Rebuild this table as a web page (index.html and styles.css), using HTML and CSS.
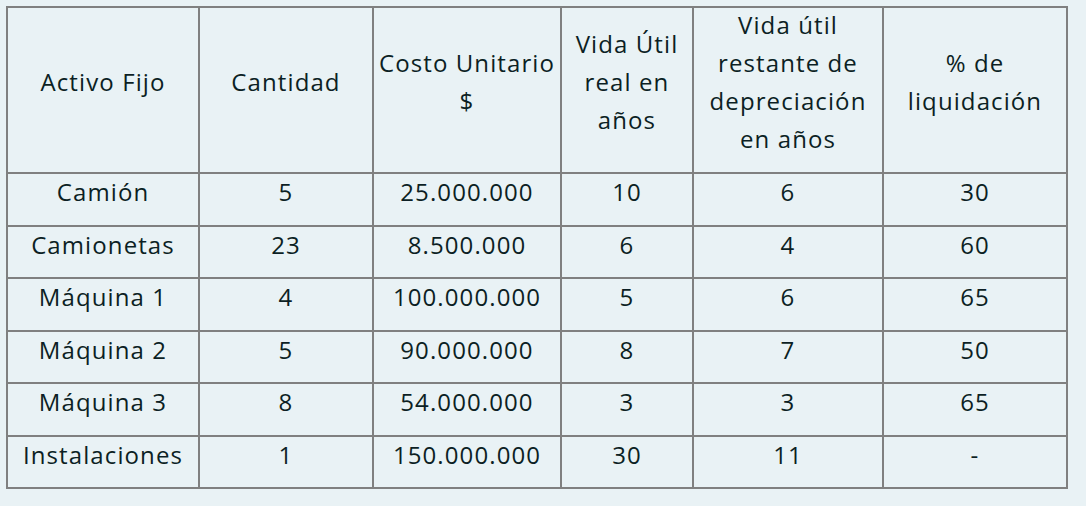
FILE: index.html
```html
<!DOCTYPE html>
<html lang="es">
<head>
<meta charset="utf-8">
<title>Activos fijos</title>
<link rel="stylesheet" href="styles.css">
</head>
<body>
<table class="assets">
  <colgroup>
    <col class="c1"><col class="c2"><col class="c3"><col class="c4"><col class="c5"><col class="c6">
  </colgroup>
  <thead>
    <tr>
      <th><span class="head">Activo Fijo</span></th>
      <th><span class="head">Cantidad</span></th>
      <th><span class="head">Costo Unitario<br>$</span></th>
      <th><span class="head">Vida Útil<br>real en<br>años</span></th>
      <th><span class="head">Vida útil<br>restante de<br>depreciación<br>en años</span></th>
      <th><span class="head">% de<br>liquidación</span></th>
    </tr>
  </thead>
  <tbody>
    <tr><td>Camión</td><td>5</td><td>25.000.000</td><td>10</td><td>6</td><td>30</td></tr>
    <tr><td>Camionetas</td><td>23</td><td>8.500.000</td><td>6</td><td>4</td><td>60</td></tr>
    <tr><td>Máquina 1</td><td>4</td><td>100.000.000</td><td>5</td><td>6</td><td>65</td></tr>
    <tr><td>Máquina 2</td><td>5</td><td>90.000.000</td><td>8</td><td>7</td><td>50</td></tr>
    <tr><td>Máquina 3</td><td>8</td><td>54.000.000</td><td>3</td><td>3</td><td>65</td></tr>
    <tr><td>Instalaciones</td><td>1</td><td>150.000.000</td><td>30</td><td>11</td><td>-</td></tr>
  </tbody>
</table>
</body>
</html>
```

FILE: styles.css
```css
html, body {
  background: #e9f2f5;
}
body {
  margin: 6px;
  font-family: "Open Sans", "Liberation Sans", sans-serif;
  font-size: 24px;
  letter-spacing: 1.1px;
  color: #0c1f24;
}
.assets {
  border-collapse: collapse;
  width: 1060px;
  table-layout: fixed;
  background: #e9f2f5;
}
.c1 { width: 192px; }
.c2 { width: 174px; }
.c3 { width: 188px; }
.c4 { width: 132px; }
.c5 { width: 190px; }
.c6 { width: 184px; }
.assets th,
.assets td {
  border: 2px solid #808080;
  text-align: center;
  font-weight: 400;
  padding: 0;
  white-space: nowrap;
}
.assets th {
  height: 150px;
  line-height: 38px;
  padding-bottom: 14px;
  vertical-align: middle;
}
.head {
  display: block;
  margin-top: -2px;
}
.assets td {
  height: 36px;
  line-height: 36px;
  padding-bottom: 14.5px;
  vertical-align: middle;
}
```
